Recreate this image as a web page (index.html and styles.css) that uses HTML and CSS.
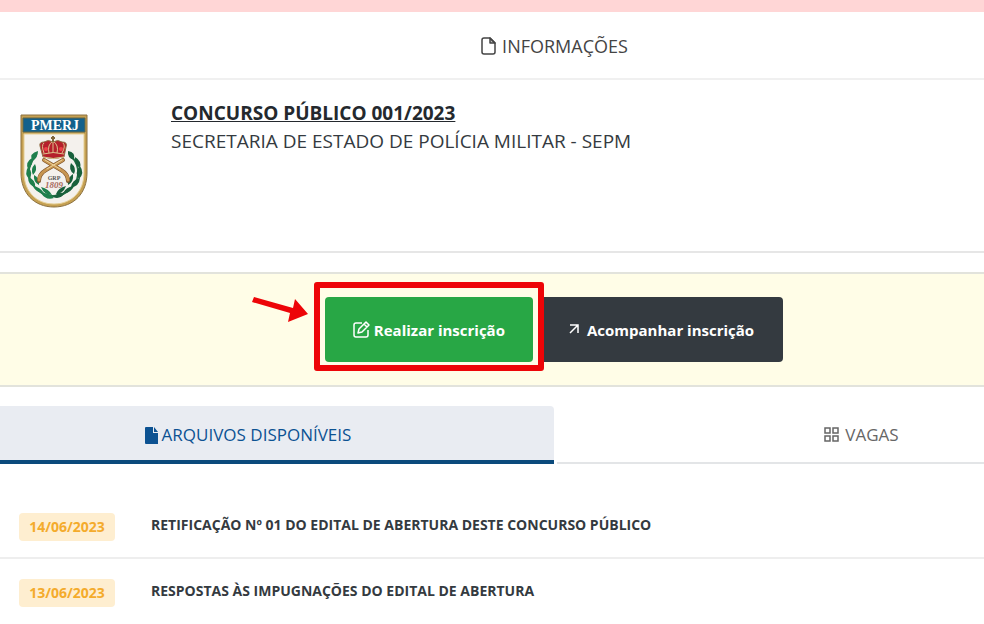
FILE: index.html
```html
<!DOCTYPE html>
<html lang="pt-br">
<head>
    <meta charset="UTF-8">
    <meta name="viewport" content="width=device-width, initial-scale=1.0">
    <title>Concurso Público 001/2023</title>
    <link rel="stylesheet" href="styles.css">
</head>
<body>
    <div class="faixa"></div>

    <!-- topo -->
    <header class="topo">
        <svg width="17" height="18" viewBox="0 0 17 18" fill="none" stroke="currentColor" stroke-width="1.500" stroke-linejoin="round">
            <path d="M10 1H4Q2 1 2 3V15Q2 17 4 17H13Q15 17 15 15V6Z"/>
            <path d="M10 1V6H15Z" fill="currentColor" fill-opacity=".35"/>
        </svg>
        <span>INFORMAÇÕES</span>
    </header>

    <!-- dados do concurso -->
    <section class="concurso">
        <svg class="brasao" width="68" height="94" viewBox="0 0 68 94" role="img" aria-label="Brasão PMERJ">
            <path d="M1 1H67V59C67 79 54 93 34 93S1 79 1 59Z" fill="#c5a052" stroke="#8c7140"/>
            <path d="M4 20H64V59C64 77 52 90 34 90S4 77 4 59Z" fill="#f4f1ed" stroke="#e6cf94"/>
            <path d="M3 4H65V18H3Z" fill="#12608c" stroke="#5f6448"/>
            <text class="sigla" x="35" y="16" text-anchor="middle">PMERJ</text>
            <!-- louros -->
            <g fill="none" stroke="#257347" stroke-width="2">
                <path d="M16 42C5 53 7 68 19 77Q25 82 33 82"/>
                <path d="M51 42C62 53 60 68 48 77Q42 82 33 82"/>
            </g>
            <g fill="#1e7f4c">
                <path d="M18 37Q9 39 12 47Q18 44 18 37ZM12 44Q5 48 8 55Q14 51 12 44ZM8 53Q4 60 9 65Q14 59 8 53ZM15 50Q10 55 13 61Q18 56 15 50ZM8 63Q8 71 15 73Q16 66 8 63ZM14 61Q13 68 19 71Q20 64 14 61ZM13 72Q16 79 24 79Q20 73 13 72ZM21 73Q24 81 32 81Q29 75 21 73ZM21 79Q26 87 34 84Q29 79 21 79Z"/>
                <path d="M48 37Q56 38 54 46Q47 44 48 37ZM55 43Q62 47 60 54Q54 51 55 43ZM51 49Q57 54 54 60Q48 56 51 49ZM60 52Q65 59 59 65Q54 59 60 52ZM53 60Q54 68 48 71Q47 64 53 60ZM60 64Q59 73 51 73Q52 66 60 64ZM46 72Q43 80 36 80Q38 74 46 72ZM54 72Q50 80 43 79Q46 73 54 72ZM45 79Q40 86 33 83Q38 78 45 79Z" fill="#18603c"/>
            </g>
            <!-- pistolas cruzadas -->
            <g fill="none" stroke-linecap="round">
                <path d="M24 46L41 56Q48 60 48 67M43 46L26 56Q19 60 19 67" stroke="#7b5129" stroke-width="4"/>
                <path d="M24 46L41 56Q48 60 48 66M43 46L26 56Q19 60 19 66" stroke="#c79551" stroke-width="3"/>
                <path d="M25 46L40 55M42 46L27 55" stroke="#eed39b"/>
            </g>
            <!-- coroa -->
            <path d="M23 43L20 32Q19 28 24 28Q28 25 33 28Q38 25 42 28Q48 28 46 33L44 43Q33 46 23 43Z" fill="#b5202b" stroke="#8e7045"/>
            <path d="M24 39Q21 31 24 29M29 39Q27 31 33 27Q39 31 37 39M42 39Q46 32 43 29M33 28V39M23 40Q33 37 44 40M23 43Q33 46 44 43" fill="none" stroke="#ddc28b"/>
            <path d="M33 22V28M31 24H35" stroke="#80663b" stroke-width="2"/>
            <circle cx="26" cy="35" r="2" fill="#ef4149"/>
            <circle cx="41" cy="35" r="2" fill="#ef4149"/>
            <text class="grp" x="34" y="66" text-anchor="middle">GRP</text>
            <text class="ano" x="34" y="74" text-anchor="middle">1809</text>
        </svg>
        <div class="dados">
            <h1>CONCURSO PÚBLICO 001/2023</h1>
            <p>SECRETARIA DE ESTADO DE POLÍCIA MILITAR - SEPM</p>
        </div>
    </section>

    <!-- botões de inscrição -->
    <section class="acoes">
        <button type="button" class="botao acompanhar">
            <svg width="14" height="14" viewBox="0 0 14 14" fill="none" stroke="currentColor" stroke-width="1.500">
                <path d="M3 2H11V10M11 2L3 10"/>
            </svg>
            <span>Acompanhar inscrição</span>
        </button>
        <div class="destaque">
            <button type="button" class="botao realizar">
                <svg width="17" height="17" viewBox="0 0 17 17" fill="none" stroke="currentColor" stroke-width="1.500" stroke-linejoin="round">
                    <path d="M9 2H3Q1 2 1 4V14Q1 16 3 16H13Q15 16 15 14V9"/>
                    <path d="M5 12L6 8L13 1L16 4L9 11ZM11 3L14 6"/>
                </svg>
                <span>Realizar inscrição</span>
            </button>
            <svg class="seta" width="58" height="34" viewBox="0 0 58 34">
                <path d="M2 4L0 9L38 20L36 29L56 21L43 6L41 15Z" fill="#ed0508"/>
            </svg>
        </div>
    </section>

    <!-- abas -->
    <nav class="abas">
        <a href="#arquivos" class="aba ativa">
            <svg width="17" height="17" viewBox="0 0 17 17">
                <path d="M3 0H10V6H15V17H3Q2 17 2 16V1Q2 0 3 0ZM11 0L15 5H11Z" fill="currentColor"/>
            </svg>
            <span>ARQUIVOS DISPONÍVEIS</span>
        </a>
        <a href="#vagas" class="aba vagas">
            <svg width="16" height="16" viewBox="0 0 16 16" fill="none" stroke="currentColor" stroke-width="1.500">
                <rect x="1" y="1" width="5" height="5"/>
                <rect x="9" y="1" width="5" height="5"/>
                <rect x="1" y="9" width="5" height="5"/>
                <rect x="9" y="9" width="5" height="5"/>
            </svg>
            <span>VAGAS</span>
        </a>
    </nav>

    <!-- arquivos -->
    <ul class="lista" id="arquivos">
        <li>
            <time class="data" datetime="2023-06-14">14/06/2023</time>
            <span class="titulo">RETIFICAÇÃO Nº 01 DO EDITAL DE ABERTURA DESTE CONCURSO PÚBLICO</span>
        </li>
        <li>
            <time class="data" datetime="2023-06-13">13/06/2023</time>
            <span class="titulo">RESPOSTAS ÀS IMPUGNAÇÕES DO EDITAL DE ABERTURA</span>
        </li>
    </ul>
</body>
</html>
```
FILE: styles.css
```css
*{
    margin: 0;
    padding: 0;
    box-sizing: border-box;
}
body{
    font-family: "Open Sans", "Noto Sans", sans-serif;
    font-size: 17px;
    line-height: 24px;
    color: #343a40;
    background-color: #fff;
}
svg{
    flex-shrink: 0;
}
.faixa{
    height: 12px;
    background-color: #ffd6d6;
}
/* topo */
.topo{
    display: flex;
    align-items: center;
    justify-content: center;
    gap: 5px;
    height: 68px;
    padding: 2px 0 0 124px;
    font-size: 18px;
    color: #444;
    border-bottom: 2px solid #f0f0f0;
}
/* dados do concurso */
.concurso{
    display: flex;
    gap: 83px;
    min-height: 173px;
    padding: 19px 20px;
    border-bottom: 2px solid #e6e6e6;
}
.brasao{
    margin-top: 15px;
}
.dados{
    font-size: 19px;
    line-height: 28px;
}
.dados h1{
    font-size: 19px;
    font-weight: 700;
    text-decoration: underline;
    color: #24292e;
}
.sigla{
    font: bold 14px "Liberation Serif", serif;
    fill: #fff;
}
.grp{
    font: bold 6px "Liberation Serif", serif;
    fill: #555;
}
.ano{
    font: italic bold 9px "Liberation Serif", serif;
    fill: #a8695c;
}
/* botões de inscrição */
.acoes{
    display: flex;
    flex-direction: row-reverse;
    justify-content: center;
    gap: 5px;
    margin: 19px 0;
    padding: 23px 0 23px 124px;
    background-color: #fffde7;
    border-top: 2px solid #e2e3dc;
    border-bottom: 2px solid #e2e3dc;
}
.botao{
    display: flex;
    align-items: center;
    justify-content: center;
    gap: 4px;
    height: 65px;
    padding: 0 28px;
    font-family: inherit;
    font-size: 15px;
    font-weight: 700;
    color: #fff;
    border: none;
    border-radius: 4px;
    cursor: pointer;
}
.realizar{
    background-color: #28a745;
}
.acompanhar{
    gap: 6px;
    padding: 0 29px;
    background-color: #343a40;
}
/* moldura vermelha em volta do botão */
.destaque{
    position: relative;
}
.destaque::before{
    content: "";
    position: absolute;
    top: -15px;
    right: -11px;
    bottom: -9px;
    left: -11px;
    border: 6px solid #ed0508;
    border-radius: 3px;
    pointer-events: none;
}
.seta{
    position: absolute;
    top: -4px;
    left: -73px;
}
/* abas */
.abas{
    display: grid;
    grid-template-columns: 554fr 427fr;
    gap: 3px;
}
.aba{
    display: flex;
    align-items: center;
    justify-content: center;
    gap: 2px;
    height: 58px;
    padding-top: 2px;
    color: #666;
    text-decoration: none;
    border-bottom: 2px solid #e3e5e7;
}
.ativa{
    padding-top: 4px;
    padding-right: 60px;
    color: #0c5292;
    background-color: #e9ecf2;
    border-bottom: 4px solid #0b4a7c;
    border-radius: 0 4px 0 0;
}
.vagas{
    gap: 5px;
    padding-left: 182px;
}
/* lista de arquivos */
.lista{
    margin-top: 29px;
    list-style: none;
}
.lista li{
    display: flex;
    align-items: center;
    gap: 36px;
    height: 66px;
    padding: 4px 19px 0;
    border-bottom: 2px solid #eee;
}
.lista li:last-child{
    border-bottom-color: transparent;
}
.data{
    width: 96px;
    font-size: 14px;
    line-height: 28px;
    font-weight: 700;
    text-align: center;
    color: #f4ab2c;
    background-color: #feeed0;
    border-radius: 4px;
}
.titulo{
    font-size: 14px;
    font-weight: 700;
    margin-bottom: 4px;
}
```
